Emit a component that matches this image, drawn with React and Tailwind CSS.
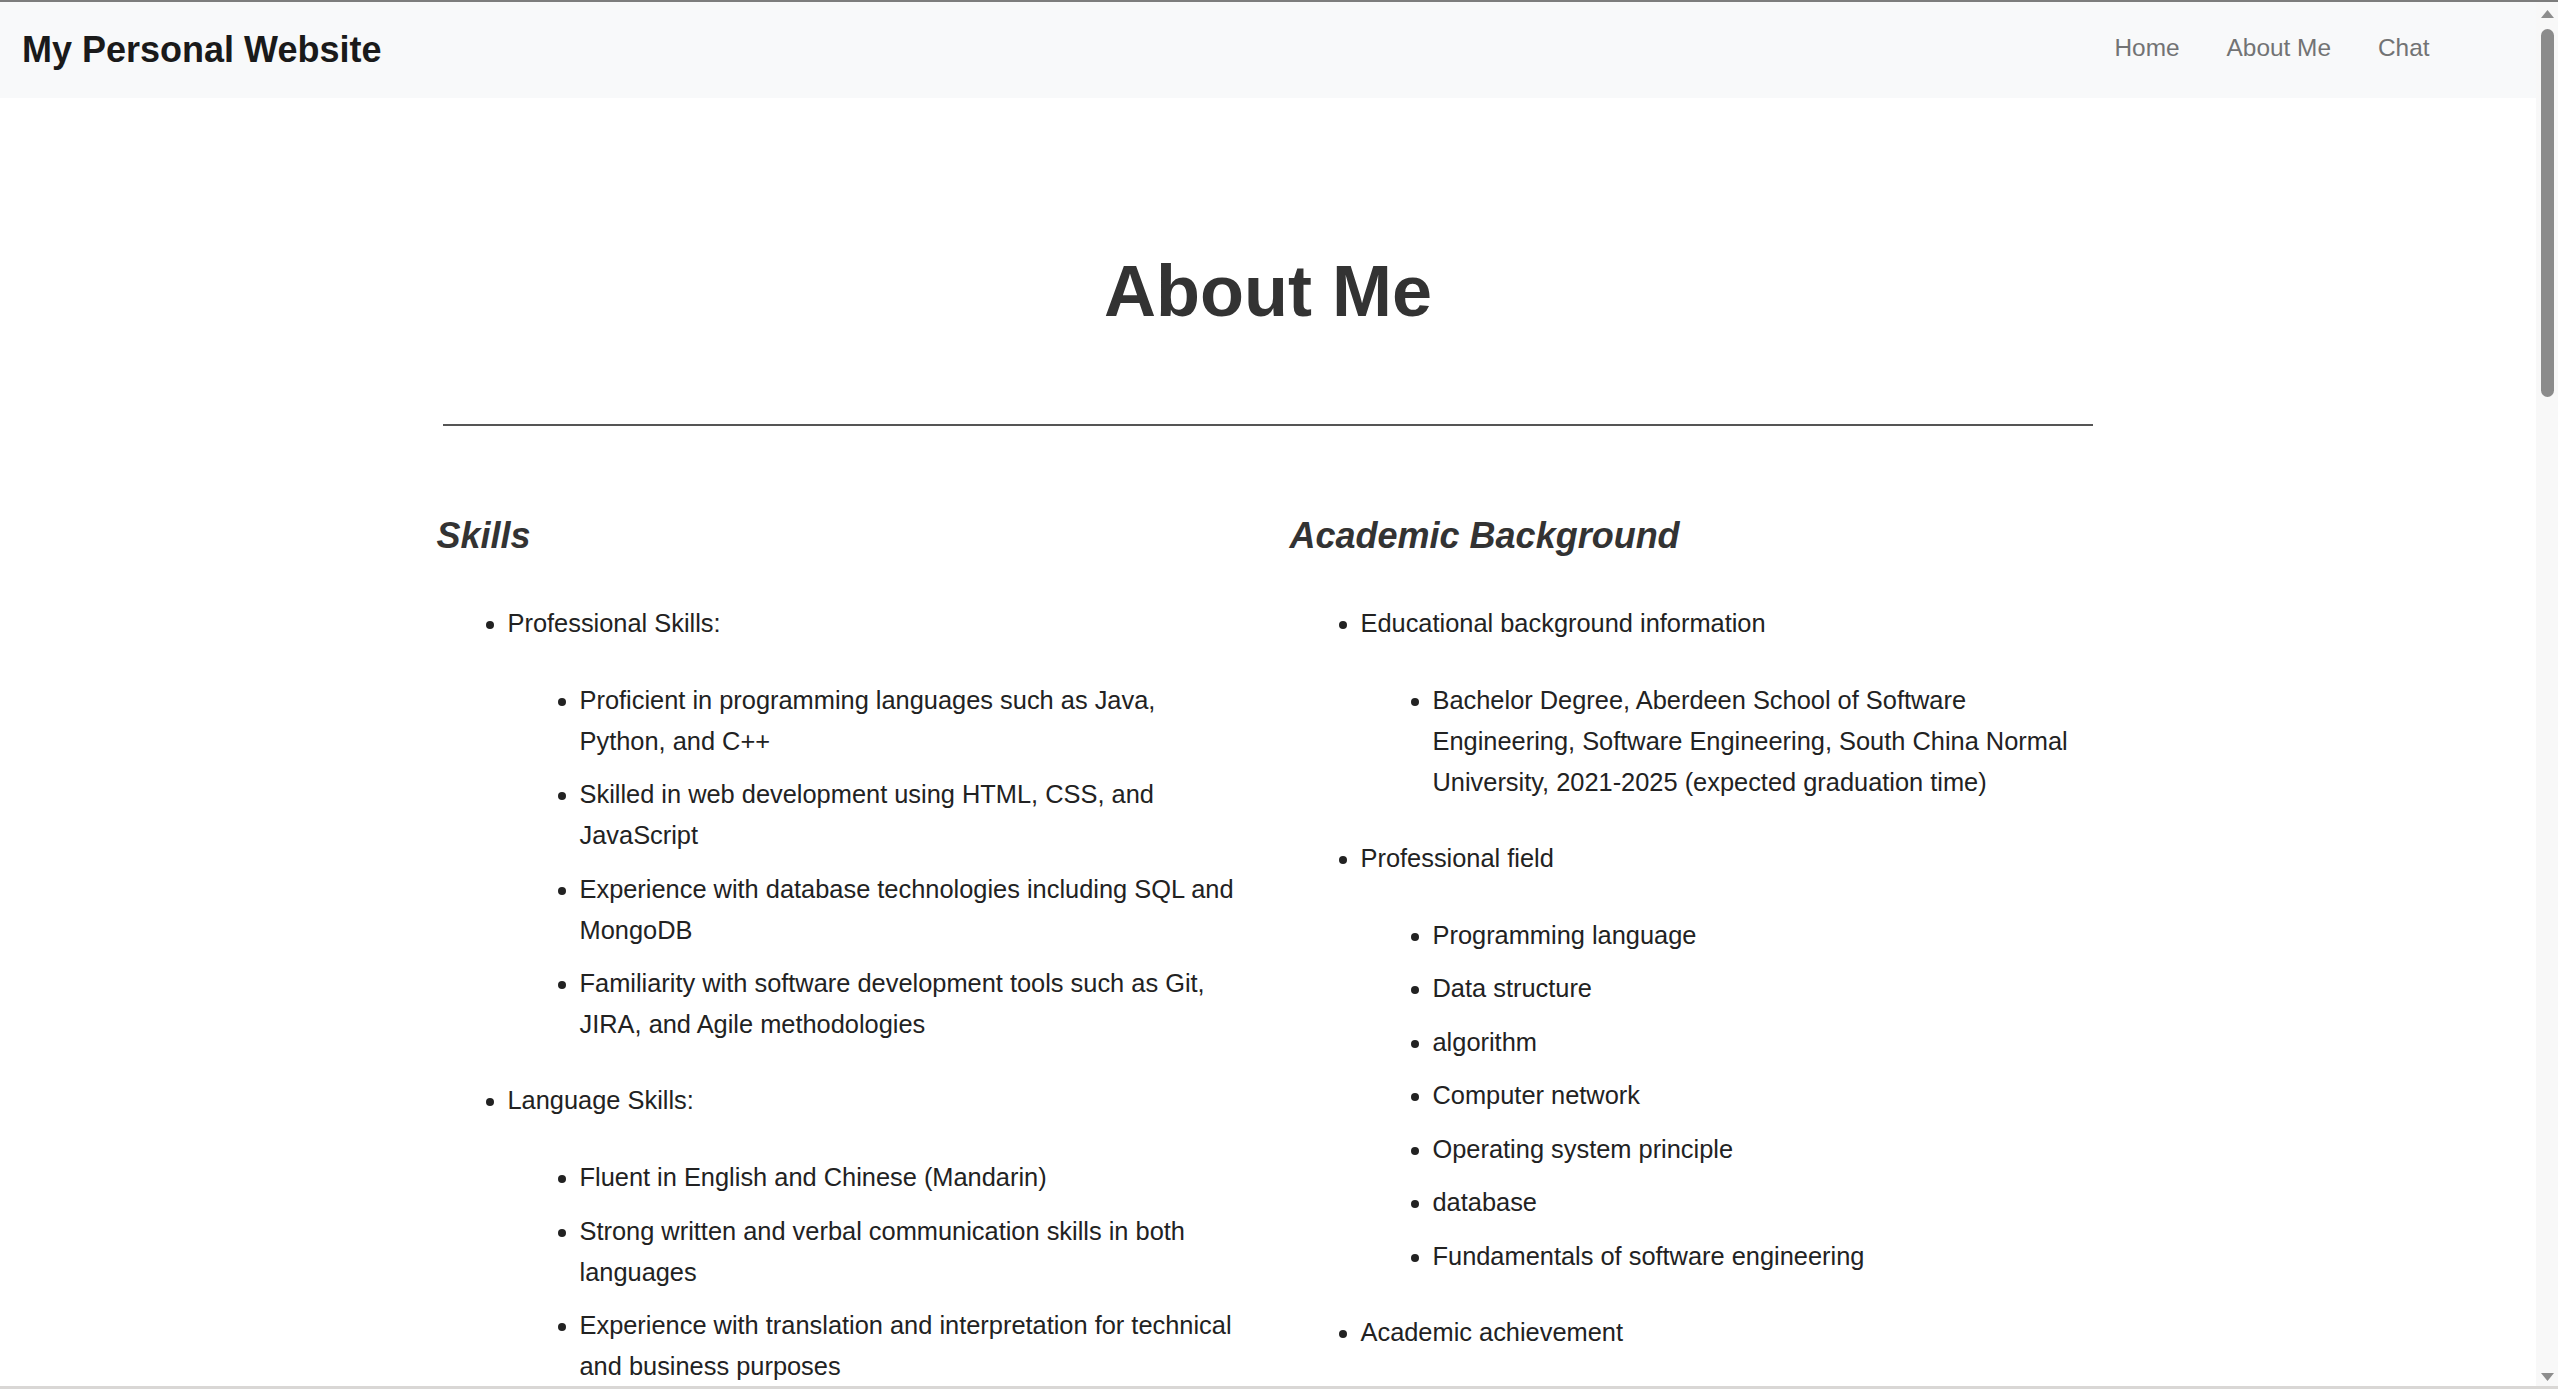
import React from 'react';

const skills = [
  {
    title: 'Professional Skills:',
    items: [
      'Proficient in programming languages such as Java, Python, and C++',
      'Skilled in web development using HTML, CSS, and JavaScript',
      'Experience with database technologies including SQL and MongoDB',
      'Familiarity with software development tools such as Git, JIRA, and Agile methodologies',
    ],
  },
  {
    title: 'Language Skills:',
    items: [
      'Fluent in English and Chinese (Mandarin)',
      'Strong written and verbal communication skills in both languages',
      'Experience with translation and interpretation for technical and business purposes',
    ],
  },
];

const academics = [
  {
    title: 'Educational background information',
    items: [
      'Bachelor Degree, Aberdeen School of Software Engineering, Software Engineering, South China Normal University, 2021-2025 (expected graduation time)',
    ],
  },
  {
    title: 'Professional field',
    items: [
      'Programming language',
      'Data structure',
      'algorithm',
      'Computer network',
      'Operating system principle',
      'database',
      'Fundamentals of software engineering',
    ],
  },
  {
    title: 'Academic achievement',
    items: [],
  },
];

const Section = ({ heading, groups }) => (
  <div>
    <h2 className="text-[36px] leading-[1.2] font-bold italic text-[#333]">{heading}</h2>
    <ul className="list-disc pl-[71px] mt-[45px] space-y-[35px]">
      {groups.map((g) => (
        <li key={g.title}>
          {g.title}
          {g.items.length > 0 && (
            <ul className="list-disc pl-[72px] mt-[36px] space-y-[12.5px]">
              {g.items.map((item) => (
                <li key={item}>{item}</li>
              ))}
            </ul>
          )}
        </li>
      ))}
    </ul>
  </div>
);

const Scrollbar = () => (
  <div className="w-[22px] bg-[#f8f8f8] flex flex-col items-center pt-[8px] pb-[5px]">
    <svg width="13" height="8" viewBox="0 0 13 8">
      <polygon points="6.5,0 13,8 0,8" fill="#8d8d8d" />
    </svg>
    <div className="mt-[11px] h-[368px] w-[13px] rounded-full bg-[#8b8b8b]" />
    <div className="flex-1" />
    <svg width="13" height="8" viewBox="0 0 13 8">
      <polygon points="0,0 13,0 6.5,8" fill="#8d8d8d" />
    </svg>
  </div>
);

export default function App() {
  return (
    <div className="h-screen flex flex-col overflow-hidden border-t-2 border-[#7d7d7d] font-['Liberation_Sans',Arial,sans-serif]">
      <div className="flex flex-1 min-h-0">
        <div className="flex-1 min-w-0 overflow-hidden bg-white">
          <nav className="h-[96px] bg-[#f8f9fa] flex items-center justify-between pl-[22px] pr-[83px]">
            <span className="text-[36px] leading-none font-bold text-[#1a1a1a]">My Personal Website</span>
            <div className="flex text-[24.4px] leading-none text-[#727374] -mt-[3px]">
              <a className="px-[23.5px]">Home</a>
              <a className="px-[23.5px]">About Me</a>
              <a className="px-[23.5px]">Chat</a>
            </div>
          </nav>

          <main>
            <h1 className="mt-[150px] text-center text-[72px] leading-[1.2] font-bold text-[#333]">About Me</h1>
            <div className="mt-[90px] mx-auto w-[1650px] h-[2px] bg-[#555]" />

            <div className="mt-[88px] mx-auto w-[1663px] grid grid-cols-2 gap-x-[43px] text-[25.4px] leading-[41px] text-[#222]">
              <Section heading="Skills" groups={skills} />
              <Section heading="Academic Background" groups={academics} />
            </div>
          </main>
        </div>
        <Scrollbar />
      </div>
      <div className="h-[3px] bg-[#d9d7d5]" />
    </div>
  );
}
